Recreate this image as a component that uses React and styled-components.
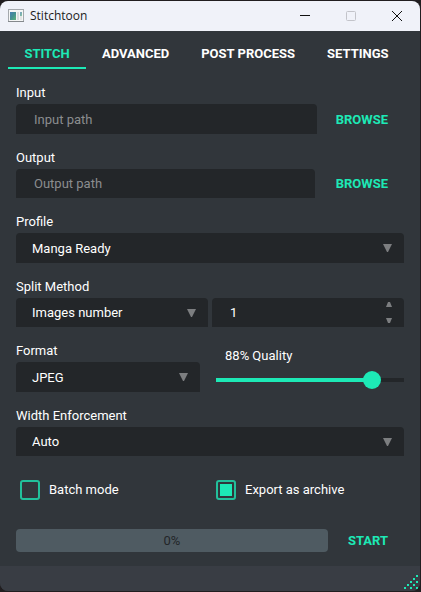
import React, { useState } from 'react';
import styled, { createGlobalStyle } from 'styled-components';

const accent = '#1de9b6';
const field = '#232629';

const GlobalStyle = createGlobalStyle`
  * { box-sizing: border-box; }
  body {
    margin: 0;
    background: #211e20;
    font-family: Roboto, sans-serif;
    font-size: 13px;
    line-height: 18px;
    color: #fff;
  }
  button, input, select { font: inherit; color: inherit; }
`;

const Desktop = styled.div`
  display: flex;
  min-height: 100vh;
  padding: 1px 1px 1px 0;
`;

const Window = styled.div`
  flex: 1;
  min-width: 0;
  display: flex;
  flex-direction: column;
  border-radius: 8px;
  overflow: hidden;
  background: #31363b;
`;

const TitleBar = styled.header`
  display: flex;
  align-items: center;
  height: 30px;
  padding-left: 8px;
  background: #f0f2f9;
  color: #1b1b1b;
`;

const Title = styled.h1`
  flex: 1;
  margin: 0 0 0 6px;
  font: 400 12px/16px "Open Sans", sans-serif;
`;

const CaptionButton = styled.button`
  display: grid;
  place-items: center;
  width: 46px;
  height: 30px;
  padding: 0;
  border: 0;
  background: none;
  color: ${(p) => (p.disabled ? '#c3c4ca' : '#111')};
`;

const Tabs = styled.nav`
  display: flex;
  padding: 0 8px;
`;

const Tab = styled.button`
  min-width: 78px;
  height: 38px;
  padding: 9px 16px 0;
  border: 0;
  border-bottom: 2px solid ${(p) => (p.$active ? accent : 'transparent')};
  background: none;
  color: ${(p) => (p.$active ? accent : '#fff')};
  font-weight: 700;
  white-space: nowrap;
`;

const Form = styled.main`
  flex: 1;
  display: flex;
  flex-direction: column;
  gap: 15px;
  padding: 15px 16px 14px;
`;

const Group = styled.div`
  display: flex;
  flex-direction: column;
  gap: 2px;
  min-width: 0;
`;

const Row = styled.div`
  display: grid;
  grid-template-columns: ${(p) => p.$columns};
  column-gap: ${(p) => p.$gap}px;
`;

const Control = styled.div`
  display: flex;
  align-items: center;
  position: relative;
  min-width: 0;
  height: ${(p) => (p.$short ? 29 : 30)}px;
  border-radius: 4px 4px 0 0;
  background: ${field};
`;

const TextInput = styled.input`
  width: 100%;
  height: 100%;
  padding: 0 18px;
  border: 0;
  outline: 0;
  background: none;
  appearance: textfield;
  &::placeholder { color: #8b8d8f; opacity: 1; }
  &::-webkit-inner-spin-button { appearance: none; }
`;

const NativeSelect = styled.select`
  width: 100%;
  height: 100%;
  padding: 1px 32px 0 16px;
  border: 0;
  outline: 0;
  appearance: none;
  background: none;
  option { background: ${field}; }
`;

const SelectArrow = styled.svg`
  position: absolute;
  right: 12px;
  pointer-events: none;
`;

const Steppers = styled.div`
  display: flex;
  flex-direction: column;
  justify-content: space-between;
  height: 100%;
  padding: 3px 12px 3px 0;
`;

const StepButton = styled.button`
  display: block;
  width: 6px;
  height: 6px;
  padding: 0;
  border: 0;
  background: none;
  svg { display: block; }
`;

const FlatButton = styled.button`
  padding: 1px 16px 0 15px;
  border: 0;
  background: none;
  color: ${accent};
  font-weight: 700;
`;

const QualityGroup = styled.div`
  display: flex;
  flex-direction: column;
  gap: 6px;
  padding-top: 5px;
`;

const QualityLabel = styled.label`
  padding-left: 9px;
`;

const Slider = styled.input`
  width: 100%;
  height: 18px;
  margin: 0;
  appearance: none;
  background: linear-gradient(${accent}, ${accent}) left center / ${(p) => p.value - 4}% 4px no-repeat,
    linear-gradient(${field}, ${field}) center / 100% 4px no-repeat;
  &::-webkit-slider-thumb {
    appearance: none;
    width: 18px;
    height: 18px;
    border-radius: 50%;
    background: ${accent};
  }
`;

const Checks = styled.div`
  display: grid;
  grid-template-columns: 1fr 1fr;
  column-gap: 8px;
  padding: 9px 0 14px 4px;
`;

const CheckLabel = styled.label`
  display: flex;
  align-items: center;
  gap: 9px;
  line-height: 20px;
`;

const CheckBox = styled.input`
  appearance: none;
  width: 20px;
  height: 20px;
  margin: 0;
  border: 2px solid #22c09b;
  border-radius: 3px;
  &:checked {
    background: linear-gradient(${accent}, ${accent}) center / 12px 12px no-repeat;
  }
`;

const Progress = styled.div`
  height: 23px;
  border-radius: 4px;
  background: #4f5b62;
  color: ${field};
  line-height: 23px;
  text-align: center;
`;

const StatusBar = styled.footer`
  display: flex;
  justify-content: flex-end;
  align-items: flex-end;
  height: 25px;
  padding: 0 2px 2px 0;
  background: #393d44;
`;

function Select({ id, options, short }) {
  return (
    <Control $short={short}>
      <NativeSelect id={id}>
        {options.map((o) => <option key={o}>{o}</option>)}
      </NativeSelect>
      <SelectArrow width="9" height="8" viewBox="0 0 9 8" aria-hidden="true">
        <path d="M0 0h9L5 8H4z" fill="#7c7e80" />
      </SelectArrow>
    </Control>
  );
}

function PathField({ id, label, gap, short }) {
  return (
    <Group>
      <label htmlFor={id}>{label}</label>
      <Row $columns="1fr auto" $gap={gap}>
        <Control $short={short}>
          <TextInput id={id} placeholder={`${label} path`} />
        </Control>
        <FlatButton>BROWSE</FlatButton>
      </Row>
    </Group>
  );
}

function AppIcon() {
  return (
    <svg width="16" height="14" viewBox="0 0 16 14" aria-hidden="true">
      <defs>
        <linearGradient id="pane" x1="0" y1="0" x2="1" y2="1">
          <stop offset="0" stopColor="#477fb5" />
          <stop offset="0.5" stopColor="#459091" />
          <stop offset="1" stopColor="#5fb579" />
        </linearGradient>
      </defs>
      <rect x="0.5" y="0.5" width="15" height="12" fill="#f5f6f6" stroke="#a5a9ad" />
      <path d="M0 12.5h16" stroke="#85898d" />
      <rect x="2" y="3" width="6" height="8" fill="url(#pane)" />
      <rect x="9" y="3" width="2" height="8" fill="#d8dcdd" />
      <rect x="12" y="3" width="2" height="4" fill="url(#pane)" opacity="0.7" />
      <rect x="12" y="7" width="2" height="4" fill="#e2e5e4" />
    </svg>
  );
}

const gripDots = [[12, 0], [9, 3], [12, 6], [6, 6], [3, 9], [9, 9], [0, 12], [6, 12], [12, 12]];

export default function App() {
  const [quality, setQuality] = useState(88);
  const [count, setCount] = useState(1);

  return (
    <>
      <GlobalStyle />
      <Desktop>
        <Window>
          <TitleBar>
            <AppIcon />
            <Title>Stitchtoon</Title>
            <CaptionButton aria-label="Minimize">
              <svg width="10" height="10"><path d="M0 4.5h10" stroke="currentColor" /></svg>
            </CaptionButton>
            <CaptionButton aria-label="Maximize" disabled>
              <svg width="10" height="10">
                <rect x="0.5" y="0.5" width="9" height="9" rx="1" fill="none" stroke="currentColor" />
              </svg>
            </CaptionButton>
            <CaptionButton aria-label="Close">
              <svg width="10" height="10"><path d="M0 0l10 10M10 0L0 10" stroke="currentColor" /></svg>
            </CaptionButton>
          </TitleBar>
          <Tabs>
            <Tab $active>STITCH</Tab>
            <Tab>ADVANCED</Tab>
            <Tab>POST PROCESS</Tab>
            <Tab>SETTINGS</Tab>
          </Tabs>
          <Form>
            <PathField id="input" label="Input" gap={4} />
            <PathField id="output" label="Output" gap={6} short />
            <Group>
              <label htmlFor="profile">Profile</label>
              <Select id="profile" options={['Manga Ready']} />
            </Group>
            <Group>
              <label htmlFor="split">Split Method</label>
              <Row $columns="1fr 1fr" $gap={4}>
                <Select id="split" options={['Images number']} short />
                <Control $short>
                  <TextInput
                    type="number"
                    aria-label="Number of images"
                    value={count}
                    onChange={(e) => setCount(Number(e.target.value))}
                  />
                  <Steppers>
                    <StepButton aria-label="Increase" onClick={() => setCount(count + 1)}>
                      <svg width="6" height="6"><path d="M0 6l2-5h2l2 5z" fill="#7c7e80" /></svg>
                    </StepButton>
                    <StepButton aria-label="Decrease" onClick={() => setCount(count - 1)}>
                      <svg width="6" height="6"><path d="M0 0l2 5h2l2-5z" fill="#7c7e80" /></svg>
                    </StepButton>
                  </Steppers>
                </Control>
              </Row>
            </Group>
            <Row $columns="184fr 188fr" $gap={16}>
              <Group>
                <label htmlFor="format">Format</label>
                <Select id="format" options={['JPEG']} />
              </Group>
              <QualityGroup>
                <QualityLabel htmlFor="quality">{quality}% Quality</QualityLabel>
                <Slider
                  id="quality"
                  type="range"
                  min="10"
                  max="100"
                  value={quality}
                  onChange={(e) => setQuality(Number(e.target.value))}
                />
              </QualityGroup>
            </Row>
            <Group>
              <label htmlFor="width">Width Enforcement</label>
              <Select id="width" options={['Auto']} short />
            </Group>
            <Checks>
              <CheckLabel><CheckBox type="checkbox" />Batch mode</CheckLabel>
              <CheckLabel><CheckBox type="checkbox" defaultChecked />Export as archive</CheckLabel>
            </Checks>
            <Row $columns="1fr auto" $gap={5}>
              <Progress role="progressbar" aria-label="Progress" aria-valuenow={0}>0%</Progress>
              <FlatButton>START</FlatButton>
            </Row>
          </Form>
          <StatusBar>
            <svg width="14" height="14" aria-hidden="true">
              {gripDots.map(([x, y]) => (
                <rect key={`${x}-${y}`} x={x} y={y} width="2" height="2" fill={accent} />
              ))}
            </svg>
          </StatusBar>
        </Window>
      </Desktop>
    </>
  );
}
